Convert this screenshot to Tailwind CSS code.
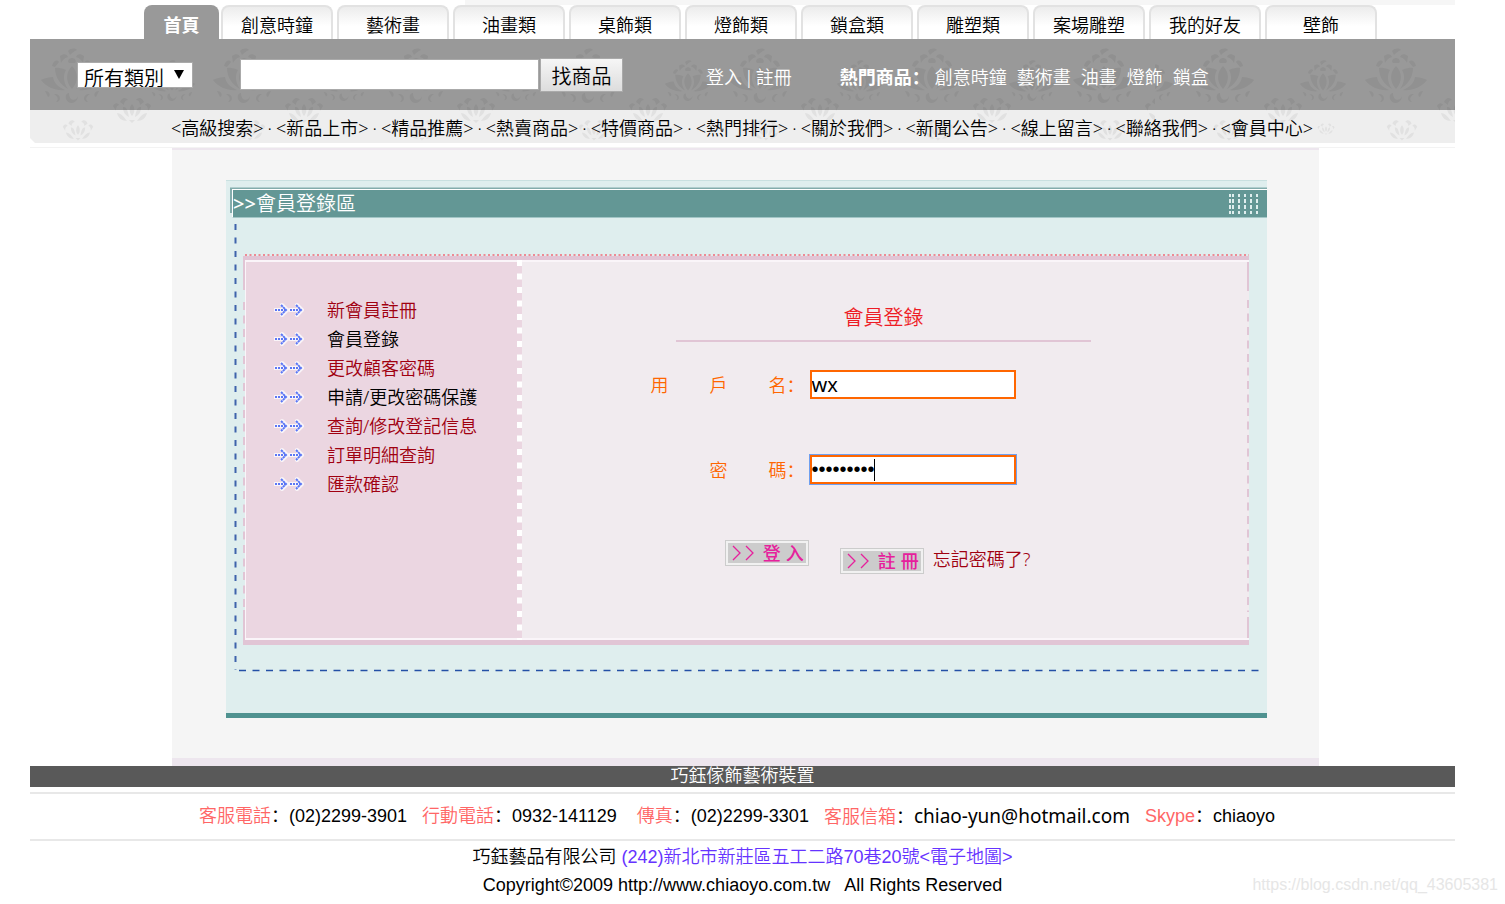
<!DOCTYPE html>
<html lang="zh-CN">
<head>
<meta charset="utf-8">
<meta name="viewport" content="width=device-width, initial-scale=1">
<title>巧鈺傢飾藝術裝置 - 會員登錄</title>
<script src="https://cdn.jsdelivr.net/npm/@tailwindcss/browser@4"></script>
</head>
<body class="bg-white font-['Noto_Sans','Noto_Sans_CJK_SC',sans-serif] text-[18px] leading-7 font-[350] text-black">
<svg class="absolute size-0" aria-hidden="true">
  <defs>
    <!-- lotus ornaments, one 172px tile -->
    <g id="lotus">
      <path d="M0-9C6-3 7 6 0 14C-7 6-6-3 0-9ZM-6-5C-13-8-17-7-17-7C-17 3-11 10-4 14C-9 7-9 0-6-5ZM6-5C13-8 17-7 17-7C17 3 11 10 4 14C9 7 9 0 6-5ZM-19 2C-25 2-31 5-31 5C-25 13-15 16-7 15C-14 12-18 8-19 2ZM19 2C25 2 31 5 31 5C25 13 15 16 7 15C14 12 18 8 19 2Z"/>
      <path d="M-4-24C-1-27 3-27 5-25C2-24 0-22-2-20ZM-12-19C-8-22-5-21-4-18C-8-17-10-14-11-12ZM12-19C8-22 5-21 4-18C8-17 10-14 11-12ZM-20-9C-19-14-15-16-13-13L-17-8ZM20-9C19-14 15-16 13-13L17-8ZM-3-12C-5-14-3-17 0-17C3-17 5-14 3-12Z"/>
      <path d="M-3 18C-3 26 4 27 6 21C6 28-3 31-6 24C-7 20-5 18-3 18ZM-18 19C-11 18-10 27-16 27C-13 24-14 22-18 19ZM18 19C11 18 10 27 16 27C13 24 14 22 18 19ZM-27 16C-22 16-21 21-24 22ZM27 16C22 16 21 21 24 22Z"/>
    </g>
    <g id="bud">
      <path d="M-12-8C-10-13-6-13-4-10C-7-10-8-7-8-5ZM12-8C10-13 6-13 4-10C7-10 8-7 8-5ZM-19-4C-17-8-14-7-13-5C-16-4-16-1-16 1ZM19-4C17-8 14-7 13-5C16-4 16-1 16 1ZM0-6C3-3 3 3 0 6C-3 3-3-3 0-6ZM-9-3C-5-4-4 2-3 7C-7 5-9 2-9-3ZM9-3C5-4 4 2 3 7C7 5 9 2 9-3ZM-15 3C-11 3-8 7-5 11C-10 11-14 8-15 3ZM15 3C11 3 8 7 5 11C10 11 14 8 15 3ZM-3 10H3L0 13Z"/>
    </g>
    <pattern id="tileA" x="30" y="0" width="172" height="143" patternUnits="userSpaceOnUse">
      <use href="#lotus" x="42" y="75"/><use href="#lotus" transform="translate(142 80) scale(.75)"/>
      <use href="#bud" x="102" y="110"/><use href="#bud" transform="translate(48 130) scale(.8)"/>
    </pattern>
    <pattern id="tileB" x="1181" y="0" width="173" height="143" patternUnits="userSpaceOnUse">
      <use href="#lotus" x="42" y="75"/><use href="#lotus" transform="translate(142 80) scale(.75)"/>
      <use href="#bud" x="102" y="110"/><use href="#bud" transform="translate(48 130) scale(.8)"/><use href="#bud" transform="translate(145 129) scale(.45)"/>
    </pattern>
    <g id="arrows" fill="none">
      <path d="M1 8H12M8 3L13 8L8 13M16 8H27M23 3L28 8L23 13" stroke="#fff" stroke-width="4" stroke-linejoin="round" stroke-linecap="round" opacity=".75"/>
      <path d="M1 8H12M16 8H27" stroke="#5b77f5" stroke-width="2" stroke-dasharray="2 1"/>
      <path d="M7 3L12 8L7 13M22 3L27 8L22 13" stroke="#5b77f5" stroke-width="2" stroke-dasharray="2.500 .5"/>
    </g>
    <path id="chev" d="M1 1L8 8L1 15M14 1L21 8L14 15" fill="none" stroke="#e6209c" stroke-width="1.300"/>
  </defs>
</svg>

<div class="mr-[50px] ml-[30px]">
  <header class="relative">
    <div class="ml-[435px] h-[5px] bg-[#f6f6f6]"></div>
    <nav class="ml-[114px] flex h-[34px] gap-0.5 leading-[41px]" aria-label="商品類別">
      <a href="#" class="w-[75px] rounded-t-lg bg-[#999] text-center font-bold text-white">首頁</a>
      <div class="flex gap-1">
        <a href="#" class="w-28 rounded-t-lg border-2 border-b-0 border-[#e2e2e2] bg-linear-to-b from-[#ececec] to-white to-60% text-center leading-[37px]">創意時鐘</a>
        <a href="#" class="w-28 rounded-t-lg border-2 border-b-0 border-[#e2e2e2] bg-linear-to-b from-[#ececec] to-white to-60% text-center leading-[37px]">藝術畫</a>
        <a href="#" class="w-28 rounded-t-lg border-2 border-b-0 border-[#e2e2e2] bg-linear-to-b from-[#ececec] to-white to-60% text-center leading-[37px]">油畫類</a>
        <a href="#" class="w-28 rounded-t-lg border-2 border-b-0 border-[#e2e2e2] bg-linear-to-b from-[#ececec] to-white to-60% text-center leading-[37px]">桌飾類</a>
        <a href="#" class="w-28 rounded-t-lg border-2 border-b-0 border-[#e2e2e2] bg-linear-to-b from-[#ececec] to-white to-60% text-center leading-[37px]">燈飾類</a>
        <a href="#" class="w-28 rounded-t-lg border-2 border-b-0 border-[#e2e2e2] bg-linear-to-b from-[#ececec] to-white to-60% text-center leading-[37px]">鎖盒類</a>
        <a href="#" class="w-28 rounded-t-lg border-2 border-b-0 border-[#e2e2e2] bg-linear-to-b from-[#ececec] to-white to-60% text-center leading-[37px]">雕塑類</a>
        <a href="#" class="w-28 rounded-t-lg border-2 border-b-0 border-[#e2e2e2] bg-linear-to-b from-[#ececec] to-white to-60% text-center leading-[37px]">案場雕塑</a>
        <a href="#" class="w-28 rounded-t-lg border-2 border-b-0 border-[#e2e2e2] bg-linear-to-b from-[#ececec] to-white to-60% text-center leading-[37px]">我的好友</a>
        <a href="#" class="w-28 rounded-t-lg border-2 border-b-0 border-[#e2e2e2] bg-linear-to-b from-[#ececec] to-white to-60% text-center leading-[37px]">壁飾</a>
      </div>
    </nav>
    <div class="relative">
      <svg class="absolute inset-0 h-full w-full" aria-hidden="true">
        <rect width="100%" height="71" fill="#999"/>
        <path d="M0 71H3000V104H5L0 99Z" fill="#eee"/>
        <g transform="translate(-30 -39)" opacity=".055">
          <rect x="30" y="39" width="1125" height="104" fill="url(#tileA)"/>
          <rect x="1155" y="39" width="2000" height="104" fill="url(#tileB)"/>
        </g>
      </svg>
      <div class="relative flex h-[71px] items-center pl-[47px] text-white">
        <form class="flex items-center text-[20px] text-black">
          <div class="relative mr-[47px]">
            <select aria-label="所有類別" class="block h-[26px] w-[116px] appearance-none border border-[#aaa] bg-white pt-1 pl-[6px] leading-6"><option>所有類別</option></select>
            <svg class="pointer-events-none absolute top-2 right-[9px]" width="10" height="9" aria-hidden="true"><path d="M0 0H10L5 9Z"/></svg>
          </div>
          <input type="search" aria-label="搜尋商品" class="mr-px h-[31px] w-[299px] border border-[#aaa] bg-white px-1">
          <button type="button" class="h-[34px] w-[83px] border border-[#aaa] bg-linear-to-b from-[#f6f6f6] to-[#ddd] pt-1">找商品</button>
        </form>
        <div class="mt-1 ml-[83px] flex gap-0.5"><a href="#">登入</a><span>|</span><a href="#">註冊</a></div>
        <strong class="mt-1 ml-12 font-bold">熱門商品：</strong>
        <div class="mt-1 ml-[5px] flex gap-2.5"><a href="#">創意時鐘</a><a href="#">藝術畫</a><a href="#">油畫</a><a href="#">燈飾</a><a href="#">鎖盒</a></div>
      </div>
      <nav class="relative flex h-[33px] justify-between pt-1 pr-[142px] pl-[141px]" aria-label="網站導覽">
        <a href="#">&lt;高級搜索&gt;</a><span>·</span><a href="#">&lt;新品上市&gt;</a><span>·</span><a href="#">&lt;精品推薦&gt;</a><span>·</span><a href="#">&lt;熱賣商品&gt;</a><span>·</span><a href="#">&lt;特價商品&gt;</a><span>·</span><a href="#">&lt;熱門排行&gt;</a><span>·</span><a href="#">&lt;關於我們&gt;</a><span>·</span><a href="#">&lt;新聞公告&gt;</a><span>·</span><a href="#">&lt;線上留言&gt;</a><span>·</span><a href="#">&lt;聯絡我們&gt;</a><span>·</span><a href="#">&lt;會員中心&gt;</a>
      </nav>
    </div>
    <div class="h-[5px] border-b border-[#f3f3f3]"></div>
  </header>

  <main class="mr-[136px] ml-[142px] border-t-2 border-b-8 border-[#ede6ee] bg-[#f5f5f5] pt-[30px] pr-[52px] pb-10 pl-[54px]">
    <section class="relative border-t border-b-[5px] border-t-[#c9e0e0] border-b-[#4f9290] bg-[#dfeeee] pb-[68px]">
      <svg class="absolute inset-0 h-full w-full" aria-hidden="true">
        <path d="M5 32V7.500H3000" fill="none" stroke="#83acac" stroke-width="2"/>
        <line x1="9.500" y1="43" x2="9.500" y2="489" stroke="#3f63ab" stroke-width="2" stroke-dasharray="6 7.500"/>
        <svg width="99.300%" height="100%"><line x1="13" y1="489.500" x2="100%" y2="489.500" stroke="#2450a6" stroke-width="1.500" stroke-dasharray="7 6.500"/></svg>
      </svg>
      <h1 class="relative mt-2 ml-[6px] flex h-[29px] items-center justify-between border border-r-0 border-t-white border-l-white border-b-[#a3c6c6] bg-[#639795] pr-2 text-[20px] text-white">
        <span><span class="font-medium">&gt;&gt;</span>會員登錄區</span>
        <svg width="31" height="20" aria-hidden="true"><path d="M2 0V20M5 0V20M11 0V20M17 0V20M23 0V20M29 0V20" stroke="#dfeeee" stroke-width="2" stroke-dasharray="3 2 4 2 4 2"/></svg>
      </h1>
      <div class="relative mt-9 mr-[18px] ml-[17px]">
        <svg class="block h-[2px] w-full" aria-hidden="true"><line x1="2" y1="1" x2="100%" y2="1" stroke="#ee8a94" stroke-width="2" stroke-dasharray="2 2.500"/></svg>
        <div class="relative flex border-t-4 border-b-[5px] border-[#e1c5d5] pl-[2px]">
          <svg class="absolute inset-0 h-full w-full" aria-hidden="true">
            <path d="M1 0V30M1 350V380" stroke="#e1c5d5" stroke-width="2"/>
            <line x1="1" y1="42" x2="1" y2="350" stroke="#e1c5d5" stroke-width="2" stroke-dasharray="8 5.500"/>
          </svg>
          <div class="w-[272px] shrink-0 border-y-2 border-l border-[#faf5f9] bg-[#ebd6e1] pt-[33px] pl-7">
            <ul>
              <li class="flex h-[29px] items-center"><svg class="mr-[23px]" width="30" height="16" aria-hidden="true"><use href="#arrows"/></svg><a href="#" class="text-[#a00010]">新會員註冊</a></li>
              <li class="flex h-[29px] items-center"><svg class="mr-[23px]" width="30" height="16" aria-hidden="true"><use href="#arrows"/></svg><a href="#">會員登錄</a></li>
              <li class="flex h-[29px] items-center"><svg class="mr-[23px]" width="30" height="16" aria-hidden="true"><use href="#arrows"/></svg><a href="#" class="text-[#a00010]">更改顧客密碼</a></li>
              <li class="flex h-[29px] items-center"><svg class="mr-[23px]" width="30" height="16" aria-hidden="true"><use href="#arrows"/></svg><a href="#">申請/更改密碼保護</a></li>
              <li class="flex h-[29px] items-center"><svg class="mr-[23px]" width="30" height="16" aria-hidden="true"><use href="#arrows"/></svg><a href="#" class="text-[#a00010]">查詢/修改登記信息</a></li>
              <li class="flex h-[29px] items-center"><svg class="mr-[23px]" width="30" height="16" aria-hidden="true"><use href="#arrows"/></svg><a href="#" class="text-[#a00010]">訂單明細查詢</a></li>
              <li class="flex h-[29px] items-center"><svg class="mr-[23px]" width="30" height="16" aria-hidden="true"><use href="#arrows"/></svg><a href="#" class="text-[#a00010]">匯款確認</a></li>
            </ul>
          </div>
          <svg class="w-[5px] shrink-0 bg-[#ebd6e1]" height="380" aria-hidden="true"><line x1="2.500" y1="0" x2="2.500" y2="380" stroke="#fff" stroke-width="5" stroke-dasharray="6 7.500"/></svg>
          <form class="relative flex flex-1 flex-col items-center border-y-2 border-[#faf5f9] bg-[#f1ebef] pt-[42px] pr-[4px] pb-16">
            <svg class="absolute top-0 right-0 h-full w-[2px]" aria-hidden="true">
              <path d="M1 0V29M1 355V380" stroke="#e1c5d5" stroke-width="2"/>
              <line x1="1" y1="38" x2="1" y2="350" stroke="#e1c5d5" stroke-width="2" stroke-dasharray="8 5.500"/>
            </svg>
            <h2 class="w-[415px] border-b-2 border-[#e1c5d5] pb-2 text-center text-[20px] text-[#ee1c25]">會員登錄</h2>
            <div class="mt-7 mr-[102px] w-[366px]">
              <div class="flex items-center justify-end gap-[5px]">
                <label for="user" class="flex flex-1 justify-end gap-[41px] text-[#f60]"><span>用</span><span>戶</span><span>名：</span></label>
                <input id="user" type="text" value="wx" class="h-[29px] w-[206px] border-2 border-[#f60] bg-white text-[20px] font-normal outline-none">
              </div>
              <div class="mt-14 flex items-center justify-end gap-[5px]">
                <label for="pass" class="flex flex-1 justify-end gap-[41px] text-[#f60]"><span>密</span><span>碼：</span></label>
                <div class="relative">
                  <input id="pass" type="password" value="wx1234567" class="block h-[29px] w-[206px] border-2 border-[#f60] bg-white font-['Liberation_Sans',sans-serif] text-[20px] font-normal ring-1 ring-[#6f9ff0] outline-none">
                  <span class="absolute top-1 left-[64px] h-[22px] w-px bg-black"></span>
                </div>
              </div>
            </div>
            <div class="mt-14 mr-3 flex">
              <button type="submit" class="flex h-[26px] w-[84px] items-center justify-between border border-[#ccc] bg-[#ccc] pr-1 pl-[6px] font-medium text-[#e6209c] inset-ring-2 inset-ring-[#f1f1f1]"><svg width="22" height="16" aria-hidden="true"><use href="#chev"/></svg><span class="flex gap-[5px]"><span>登</span><span>入</span></span></button>
              <button type="button" class="mt-2 ml-[31px] flex h-[26px] w-[84px] items-center justify-between border border-[#ccc] bg-[#ccc] pr-1 pl-[6px] font-medium text-[#e6209c] inset-ring-2 inset-ring-[#f1f1f1]"><svg width="22" height="16" aria-hidden="true"><use href="#chev"/></svg><span class="flex gap-[5px]"><span>註</span><span>冊</span></span></button>
              <a href="#" class="mt-[5px] ml-[9px] text-[#a00010]">忘記密碼了?</a>
            </div>
          </form>
        </div>
      </div>
    </section>
  </main>

  <footer class="font-['Liberation_Sans','Noto_Sans_CJK_SC',sans-serif]">
    <div class="h-[21px] bg-[#595959] text-center leading-[21px] text-white">巧鈺傢飾藝術裝置</div>
    <div class="mt-[5px] flex justify-center border-y-2 border-[#e8e8e8] pt-2 pr-[11px] pb-2">
      <span class="mr-[15px]"><span class="text-[#ff6666]">客服電話</span>：(02)2299-3901</span>
      <span class="mr-5"><span class="text-[#ff6666]">行動電話</span>：0932-141129</span>
      <span class="mr-[15px]"><span class="text-[#ff6666]">傳真</span>：(02)2299-3301</span>
      <span class="mr-[15px]"><span class="text-[#ff6666]">客服信箱</span>：<a href="mailto:chiao-yun@hotmail.com" class="font-['Noto_Sans',sans-serif] text-[19px] font-normal">chiao-yun@hotmail.com</a></span>
      <span><span class="text-[#ff6666]">Skype</span>：chiaoyo</span>
    </div>
    <div class="relative pt-0.5 text-center">
      <p>巧鈺藝品有限公司 <a href="#" class="text-[#6633ff]">(242)新北市新莊區五工二路70巷20號&lt;電子地圖&gt;</a></p>
      <p>Copyright©2009 http://www.chiaoyo.com.tw &nbsp; All Rights Reserved</p>
      <span class="absolute right-[-43px] bottom-0 text-[16px] text-[#e6e6e6]">https://blog.csdn.net/qq_43605381</span>
    </div>
  </footer>
</div>
</body>
</html>
